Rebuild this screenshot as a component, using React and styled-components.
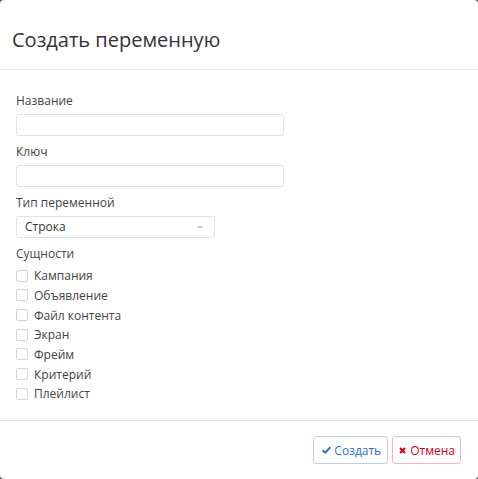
import React from "react"
import styled, { createGlobalStyle } from "styled-components"

const GlobalStyle = createGlobalStyle`
  html, body {
    margin: 0;
    padding: 0;
    background: #555;
  }
  * {
    box-sizing: border-box;
  }
`

const Modal = styled.div`
  width: 478px;
  height: 479px;
  background: #fff;
  border-radius: 4px;
  font-family: "Open Sans", "Liberation Sans", sans-serif;
  color: #333;
  display: flex;
  flex-direction: column;
  overflow: hidden;
`

const Header = styled.div`
  padding: 26px 12px 15px;
  border-bottom: 1px solid #e5e5e5;
`

const Title = styled.h4`
  margin: 0;
  font-size: 20px;
  font-weight: 400;
  line-height: 28px;
  color: #333;
`

const Body = styled.div`
  padding: 22px 16px 0;
  flex: 1;
  display: flex;
  flex-direction: column;
`

const Label = styled.label`
  display: block;
  font-size: 12px;
  line-height: 17px;
  color: #444;
  margin-bottom: 5px;
`

const Field = styled.div`
  margin-bottom: 7px;
`

const Input = styled.input`
  display: block;
  width: ${(p) => p.$width}px;
  height: 22px;
  border: 1px solid #dfe3ea;
  border-radius: 3px;
  padding: 0 8px;
  font-family: inherit;
  font-size: 12px;
  outline: none;
`

const Select = styled.div`
  width: 199px;
  height: 22px;
  border: 1px solid #dfe3ea;
  border-radius: 3px;
  padding: 0 8px;
  font-size: 12px;
  line-height: 20px;
  color: #333;
  display: flex;
  align-items: center;
  justify-content: space-between;
`

const Caret = styled.span`
  width: 0;
  height: 0;
  border-left: 3px solid transparent;
  border-right: 3px solid transparent;
  border-top: 3px solid #c0c0c0;
  margin-right: 3px;
`

const CheckList = styled.div`
  display: flex;
  flex-direction: column;
  margin-top: -1px;
`

const CheckRow = styled.label`
  display: flex;
  align-items: center;
  height: 19.67px;
  font-size: 12px;
  color: #444;
`

const Box = styled.span`
  width: 12px;
  height: 12px;
  border: 1px solid #cfd3d8;
  border-radius: 2px;
  background: #fff;
  margin-right: 6px;
  flex-shrink: 0;
`

const Footer = styled.div`
  border-top: 1px solid #e5e5e5;
  padding: 15px 17px 15px;
  display: flex;
  justify-content: flex-end;
  gap: 4px;
`

const Button = styled.button`
  height: 28px;
  padding: ${(p) => (p.$danger ? "0 5px 0 6px" : "0 6px 0 8px")};
  background: #fff;
  border: 1px solid ${(p) => (p.$danger ? "#f1b7bd" : "#b9d1ef")};
  color: ${(p) => (p.$danger ? "#d0021b" : "#2f6fd0")};
  border-radius: 3px;
  font-family: inherit;
  font-size: 12px;
  display: flex;
  align-items: center;
  gap: ${(p) => (p.$danger ? "4px" : "3px")};
  cursor: pointer;
`

const entities = [
  "Кампания",
  "Объявление",
  "Файл контента",
  "Экран",
  "Фрейм",
  "Критерий",
  "Плейлист",
]

const CheckIcon = () => (
  <svg width="9" height="8" viewBox="0 0 9 8">
    <path d="M0.7 4.2 L3.2 6.6 L8.3 1.2" fill="none" stroke="#2f6fd0" strokeWidth="2" />
  </svg>
)

const CrossIcon = () => (
  <svg width="7" height="7" viewBox="0 0 7 7">
    <path d="M1 1 L6 6 M6 1 L1 6" fill="none" stroke="#d0021b" strokeWidth="2" />
  </svg>
)

const App = () => {
  return (
    <>
      <GlobalStyle />
      <Modal>
        <Header>
          <Title>Создать переменную</Title>
        </Header>
        <Body>
          <Field>
            <Label>Название</Label>
            <Input $width={268} />
          </Field>
          <Field>
            <Label>Ключ</Label>
            <Input $width={268} />
          </Field>
          <Field>
            <Label>Тип переменной</Label>
            <Select>
              <span>Строка</span>
              <Caret />
            </Select>
          </Field>
          <Label>Сущности</Label>
          <CheckList>
            {entities.map((name) => (
              <CheckRow key={name}>
                <Box />
                {name}
              </CheckRow>
            ))}
          </CheckList>
        </Body>
        <Footer>
          <Button>
            <CheckIcon />
            Создать
          </Button>
          <Button $danger>
            <CrossIcon />
            Отмена
          </Button>
        </Footer>
      </Modal>
    </>
  )
}

export default App
